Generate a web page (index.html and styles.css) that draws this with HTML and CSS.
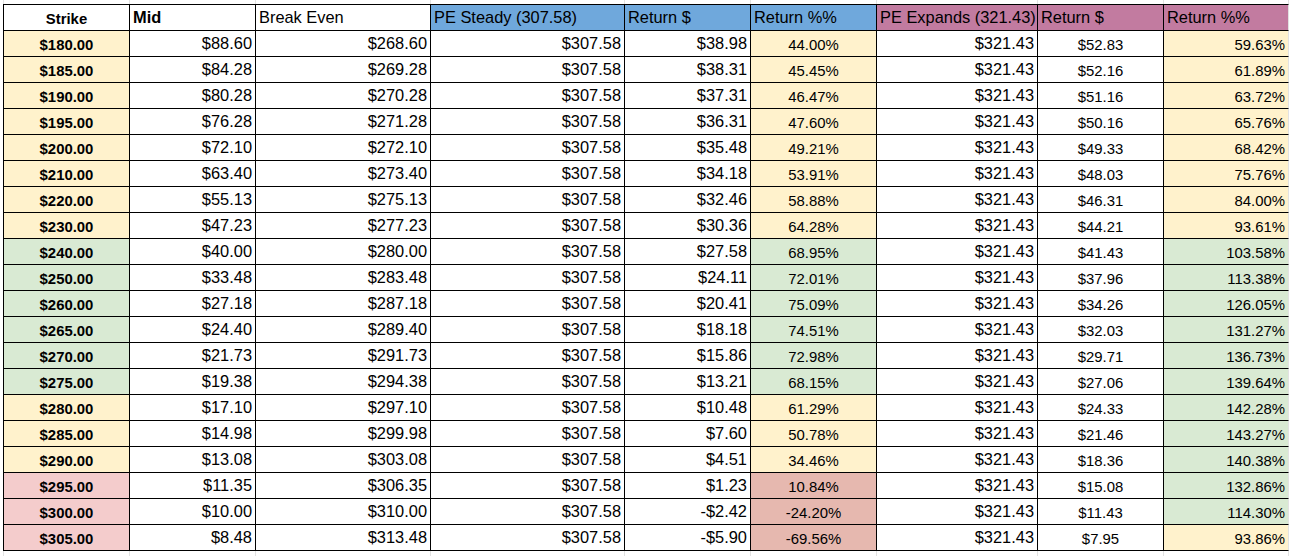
FILE: index.html
```html
<!DOCTYPE html>
<html>
<head>
<meta charset="utf-8">
<link rel="stylesheet" href="styles.css">
</head>
<body>
<div class="sheet">
  <div class="row gap top"><div></div><div></div><div></div><div></div><div></div><div></div><div></div><div></div><div></div></div>
  <div class="row head">
    <div>Strike</div><div>Mid</div><div>Break Even</div>
    <div class="blue">PE Steady (307.58)</div><div class="blue">Return $</div><div class="blue">Return %%</div>
    <div class="pink">PE Expands (321.43)</div><div class="pink">Return $</div><div class="pink">Return %%</div>
  </div>
  <div class="row"><div class="yel">$180.00</div><div>$88.60</div><div>$268.60</div><div>$307.58</div><div>$38.98</div><div class="yel">44.00%</div><div>$321.43</div><div>$52.83</div><div class="yel">59.63%</div></div>
  <div class="row"><div class="yel">$185.00</div><div>$84.28</div><div>$269.28</div><div>$307.58</div><div>$38.31</div><div class="yel">45.45%</div><div>$321.43</div><div>$52.16</div><div class="yel">61.89%</div></div>
  <div class="row"><div class="yel">$190.00</div><div>$80.28</div><div>$270.28</div><div>$307.58</div><div>$37.31</div><div class="yel">46.47%</div><div>$321.43</div><div>$51.16</div><div class="yel">63.72%</div></div>
  <div class="row"><div class="yel">$195.00</div><div>$76.28</div><div>$271.28</div><div>$307.58</div><div>$36.31</div><div class="yel">47.60%</div><div>$321.43</div><div>$50.16</div><div class="yel">65.76%</div></div>
  <div class="row"><div class="yel">$200.00</div><div>$72.10</div><div>$272.10</div><div>$307.58</div><div>$35.48</div><div class="yel">49.21%</div><div>$321.43</div><div>$49.33</div><div class="yel">68.42%</div></div>
  <div class="row"><div class="yel">$210.00</div><div>$63.40</div><div>$273.40</div><div>$307.58</div><div>$34.18</div><div class="yel">53.91%</div><div>$321.43</div><div>$48.03</div><div class="yel">75.76%</div></div>
  <div class="row"><div class="yel">$220.00</div><div>$55.13</div><div>$275.13</div><div>$307.58</div><div>$32.46</div><div class="yel">58.88%</div><div>$321.43</div><div>$46.31</div><div class="yel">84.00%</div></div>
  <div class="row"><div class="yel">$230.00</div><div>$47.23</div><div>$277.23</div><div>$307.58</div><div>$30.36</div><div class="yel">64.28%</div><div>$321.43</div><div>$44.21</div><div class="yel">93.61%</div></div>
  <div class="row"><div class="grn">$240.00</div><div>$40.00</div><div>$280.00</div><div>$307.58</div><div>$27.58</div><div class="grn">68.95%</div><div>$321.43</div><div>$41.43</div><div class="grn">103.58%</div></div>
  <div class="row"><div class="grn">$250.00</div><div>$33.48</div><div>$283.48</div><div>$307.58</div><div>$24.11</div><div class="grn">72.01%</div><div>$321.43</div><div>$37.96</div><div class="grn">113.38%</div></div>
  <div class="row"><div class="grn">$260.00</div><div>$27.18</div><div>$287.18</div><div>$307.58</div><div>$20.41</div><div class="grn">75.09%</div><div>$321.43</div><div>$34.26</div><div class="grn">126.05%</div></div>
  <div class="row"><div class="grn">$265.00</div><div>$24.40</div><div>$289.40</div><div>$307.58</div><div>$18.18</div><div class="grn">74.51%</div><div>$321.43</div><div>$32.03</div><div class="grn">131.27%</div></div>
  <div class="row"><div class="grn">$270.00</div><div>$21.73</div><div>$291.73</div><div>$307.58</div><div>$15.86</div><div class="grn">72.98%</div><div>$321.43</div><div>$29.71</div><div class="grn">136.73%</div></div>
  <div class="row"><div class="grn">$275.00</div><div>$19.38</div><div>$294.38</div><div>$307.58</div><div>$13.21</div><div class="grn">68.15%</div><div>$321.43</div><div>$27.06</div><div class="grn">139.64%</div></div>
  <div class="row"><div class="yel">$280.00</div><div>$17.10</div><div>$297.10</div><div>$307.58</div><div>$10.48</div><div class="yel">61.29%</div><div>$321.43</div><div>$24.33</div><div class="grn">142.28%</div></div>
  <div class="row"><div class="yel">$285.00</div><div>$14.98</div><div>$299.98</div><div>$307.58</div><div>$7.60</div><div class="yel">50.78%</div><div>$321.43</div><div>$21.46</div><div class="grn">143.27%</div></div>
  <div class="row"><div class="yel">$290.00</div><div>$13.08</div><div>$303.08</div><div>$307.58</div><div>$4.51</div><div class="yel">34.46%</div><div>$321.43</div><div>$18.36</div><div class="grn">140.38%</div></div>
  <div class="row"><div class="red">$295.00</div><div>$11.35</div><div>$306.35</div><div>$307.58</div><div>$1.23</div><div class="rose">10.84%</div><div>$321.43</div><div>$15.08</div><div class="grn">132.86%</div></div>
  <div class="row"><div class="red">$300.00</div><div>$10.00</div><div>$310.00</div><div>$307.58</div><div>-$2.42</div><div class="rose">-24.20%</div><div>$321.43</div><div>$11.43</div><div class="grn">114.30%</div></div>
  <div class="row"><div class="red">$305.00</div><div>$8.48</div><div>$313.48</div><div>$307.58</div><div>-$5.90</div><div class="rose">-69.56%</div><div>$321.43</div><div>$7.95</div><div class="yel">93.86%</div></div>
  <div class="row gap bottom"><div></div><div></div><div></div><div></div><div></div><div></div><div></div><div></div><div></div></div>
</div>
</body>
</html>
```
FILE: styles.css
```css
html, body {
  margin: 0;
  padding: 0;
  background: #fff;
}

.sheet {
  display: grid;
  grid-template-columns: 127px 126px 175px 194px 126px 126px 161px 126px 125px;
  margin-left: 3px;
  font-family: "Liberation Sans", Arial, sans-serif;
  color: #000;
}

.row {
  display: contents;
}

.row > div {
  box-sizing: border-box;
  height: 26px;
  border-right: 1px solid #000;
  border-bottom: 1px solid #000;
  padding: 0 3px 3px 3px;
  display: flex;
  align-items: flex-end;
  justify-content: flex-end;
  font-size: 16.4px;
  line-height: normal;
  white-space: nowrap;
  overflow: hidden;
}

.row > div:nth-child(1) {
  border-left: 1px solid #000;
  justify-content: center;
  font-weight: bold;
  font-size: 14.9px;
}

.row > div:nth-child(6),
.row > div:nth-child(8) {
  justify-content: center;
  font-size: 14.9px;
}

.row > div:nth-child(9) {
  font-size: 14.9px;
  border-right-color: #e2e2e2;
}

.row.head > div {
  height: 27px;
  border-top: 1px solid #000;
  justify-content: flex-start;
  font-size: 16.4px;
}

.row.head > div:nth-child(1) {
  justify-content: center;
  font-size: 14.9px;
}

.row.head > div:nth-child(2) {
  font-weight: bold;
}

.row.gap > div {
  border-right: 1px solid #e2e2e2;
  border-bottom: none;
  padding: 0;
}

.row.gap > div:nth-child(1) {
  border-left: 1px solid #e2e2e2;
}

.row.gap.top > div {
  height: 4px;
}

.row.gap.bottom > div {
  height: 5px;
}

.blue { background: #6fa8dc; }
.pink { background: #c27ba0; }
.yel { background: #fff2cc; }
.grn { background: #d9ead3; }
.red { background: #f4cccc; }
.rose { background: #e6b8af; }
```
